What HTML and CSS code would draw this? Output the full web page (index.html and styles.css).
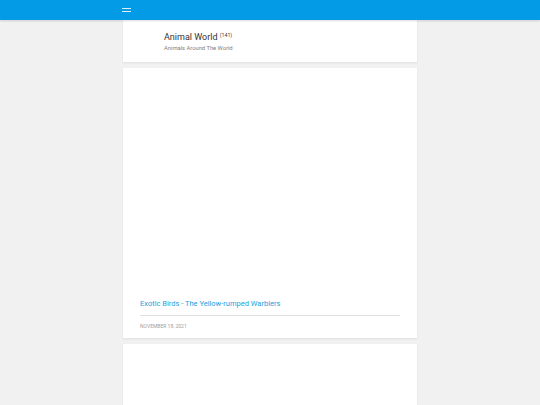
FILE: index.html
```html
<!DOCTYPE html>
<html>
<head>
<meta charset="utf-8">
<link rel="stylesheet" href="styles.css">
</head>
<body>
<header class="topbar">
  <div class="topbar-inner">
    <span class="menu-icon"><span></span><span></span></span>
  </div>
</header>
<main class="content">
  <section class="card blog-head">
    <h1 class="blog-title">Animal World <sup class="count">(141)</sup></h1>
    <p class="blog-desc">Animals Around The World</p>
  </section>
  <article class="card post">
    <div class="post-image"></div>
    <h2 class="post-title">Exotic Birds - The Yellow-rumped Warblers</h2>
    <div class="post-date">November 18, 2021</div>
  </article>
  <article class="card post post-next"></article>
</main>
</body>
</html>
```
FILE: styles.css
```css
html, body {
  margin: 0;
  padding: 0;
}
body {
  background: #f1f1f1;
  font-family: Roboto, "Liberation Sans", sans-serif;
  overflow: hidden;
  height: 405px;
}
.topbar {
  background: #039be5;
  height: 20px;
  box-shadow: 0 1px 2px rgba(0,0,0,0.15);
  position: relative;
  z-index: 2;
}
.topbar-inner {
  width: 294px;
  margin: 0 auto;
  height: 20px;
  display: flex;
  align-items: center;
}
.menu-icon {
  display: flex;
  flex-direction: column;
  gap: 2px;
  width: 9px;
  margin-left: -1px;
}
.menu-icon span {
  display: block;
  height: 1px;
  background: rgba(255,255,255,0.85);
}
.content {
  width: 294px;
  margin: 0 auto;
  display: flex;
  flex-direction: column;
  gap: 6px;
}
.card {
  background: #fff;
  box-shadow: 0 1px 2px rgba(0,0,0,0.08);
}
.blog-head {
  height: 42px;
  box-sizing: border-box;
  padding: 11px 0 0 41px;
}
.blog-title {
  margin: 0;
  font-size: 9px;
  font-weight: 400;
  color: #333;
  line-height: 12px;
}
.count {
  font-size: 5.2px;
  vertical-align: top;
  position: relative;
  top: -2px;
}
.blog-desc {
  margin: 2px 0 0;
  font-size: 5.8px;
  color: #808080;
}
.post {
  height: 270px;
  box-sizing: border-box;
  padding: 0 17px;
  display: flex;
  flex-direction: column;
}
.post-image {
  flex: 1;
}
.post-title {
  margin: 0;
  font-size: 7.5px;
  font-weight: 400;
  color: #1a9fe0;
  line-height: 10px;
  padding-bottom: 6px;
  border-bottom: 1px solid #e0e0e0;
}
.post-date {
  font-size: 5px;
  color: #a0a0a0;
  text-transform: uppercase;
  padding: 7px 0 9px;
}
.post-next {
  height: 80px;
}
```
